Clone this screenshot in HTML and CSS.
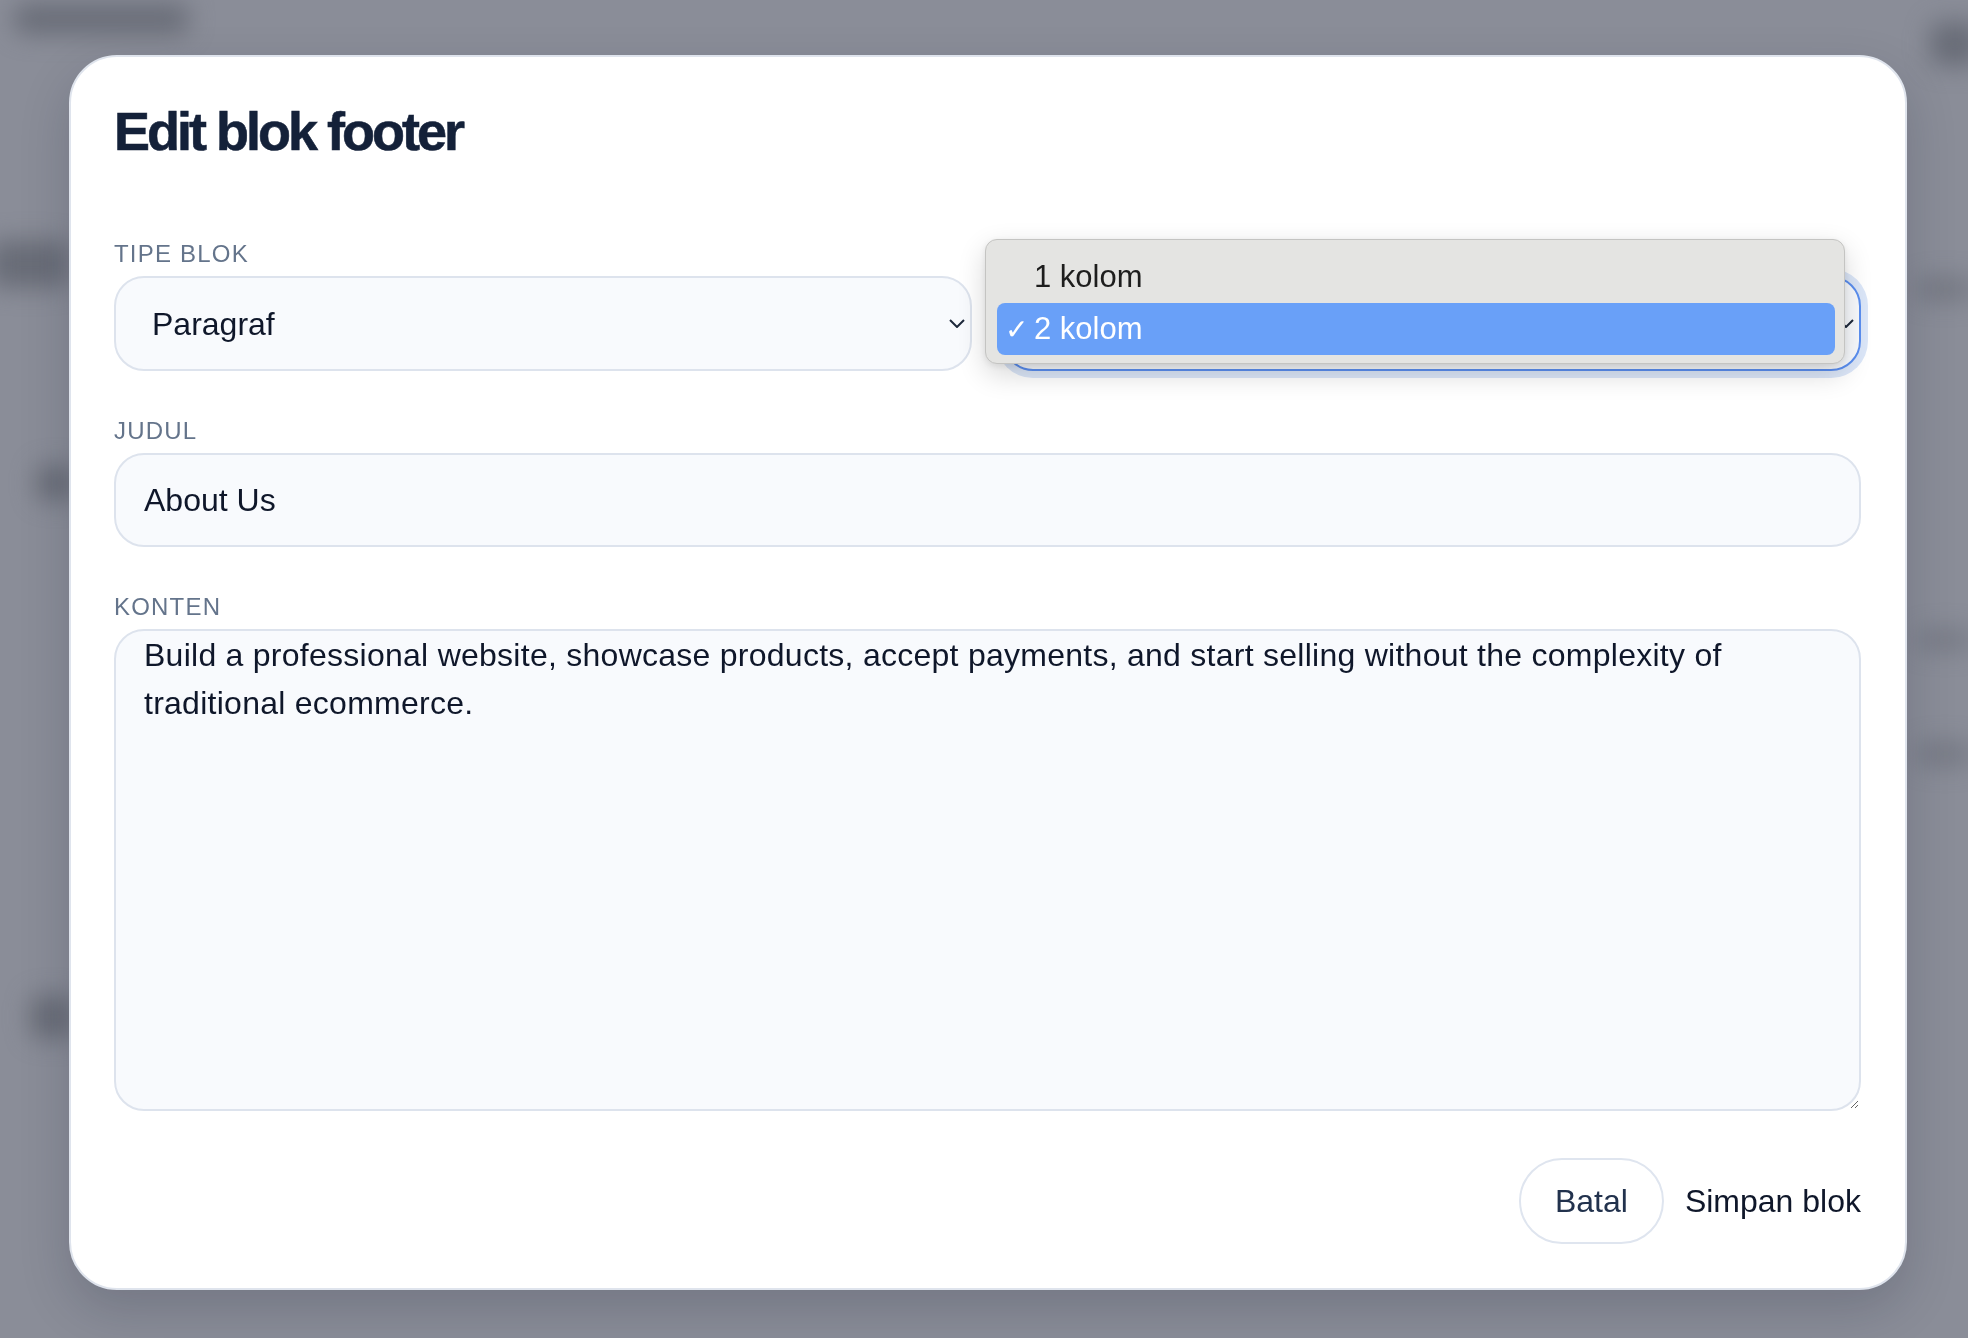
FILE: index.html
```html
<!DOCTYPE html>
<html lang="id">
<head>
  <meta charset="UTF-8">
  <meta name="viewport" content="width=device-width, initial-scale=1.0">
  <title>Edit blok footer</title>
  <link rel="stylesheet" href="styles.css">
</head>
<body>
  <!-- halaman di belakang modal (buram) -->
  <div class="backdrop" aria-hidden="true">
    <div class="blob blob-title"></div>
    <div class="blob blob-l1"></div>
    <div class="blob blob-l2"></div>
    <div class="blob blob-l3"></div>
    <div class="blob blob-r1"></div>
    <div class="blob blob-r2"></div>
    <div class="blob blob-r3"></div>
    <div class="blob blob-r4"></div>
  </div>

  <div class="overlay">
    <div class="modal" role="dialog" aria-labelledby="modalTitle">
      <h1 id="modalTitle">Edit blok footer</h1>

      <div class="row">
        <div class="field">
          <label class="label" for="tipeBlok">Tipe blok</label>
          <div class="select-wrap">
            <select id="tipeBlok" class="control select">
              <option>Paragraf</option>
              <option>Tautan</option>
            </select>
            <svg class="chevron" viewBox="0 0 16 9" aria-hidden="true"><path d="M1 1 L8 8 L15 1"/></svg>
          </div>
        </div>

        <div class="field">
          <!-- label tertutup oleh menu yang terbuka -->
          <label class="label label-covered" for="kolom">Kolom</label>
          <div class="select-wrap">
            <select id="kolom" class="control select is-open">
              <option>1 kolom</option>
              <option selected>2 kolom</option>
            </select>
            <svg class="chevron" viewBox="0 0 16 9" aria-hidden="true"><path d="M1 1 L8 8 L15 1"/></svg>
          </div>
          <ul class="select-menu">
            <li class="menu-item">1 kolom</li>
            <li class="menu-item active"><span class="check">✓</span>2 kolom</li>
          </ul>
        </div>
      </div>

      <div class="field field-block">
        <label class="label" for="judul">Judul</label>
        <input id="judul" class="control" type="text" value="About Us">
      </div>

      <div class="field field-block">
        <label class="label" for="konten">Konten</label>
        <textarea id="konten" class="control textarea">Build a professional website, showcase products, accept payments, and start selling without the complexity of traditional ecommerce.</textarea>
      </div>

      <div class="actions">
        <button type="button" class="btn-ghost">Batal</button>
        <button type="button" class="btn-save">Simpan blok</button>
      </div>
    </div>
  </div>
</body>
</html>
```

FILE: styles.css
```css
/* Dasar */
* {
  margin: 0;
  padding: 0;
  box-sizing: border-box;
}
body {
  font-family: 'Liberation Sans', Arial, Helvetica, sans-serif;
  background: #8a8d98;
  color: #0f172a;
  width: 1968px;
  height: 1338px;
  overflow: hidden;
  position: relative;
}

/* Halaman buram di belakang */
.backdrop {
  position: absolute;
  inset: 0;
  filter: blur(12px);
}
.blob {
  position: absolute;
  background: #5e616c;
  border-radius: 12px;
  opacity: 0.75;
}
.blob-title { left: 14px; top: 4px; width: 175px; height: 30px; }
.blob-l1 { left: -10px; top: 240px; width: 80px; height: 48px; }
.blob-l2 { left: 36px; top: 465px; width: 40px; height: 36px; }
.blob-l3 { left: 30px; top: 995px; width: 45px; height: 44px; }
.blob-r1 { left: 1930px; top: 22px; width: 50px; height: 44px; }
.blob-r2 { left: 1915px; top: 278px; width: 60px; height: 22px; opacity: 0.5; }
.blob-r3 { left: 1915px; top: 630px; width: 60px; height: 20px; opacity: 0.45; }
.blob-r4 { left: 1915px; top: 742px; width: 60px; height: 24px; opacity: 0.45; }

/* Modal */
.overlay {
  position: relative;
  padding: 55px 0 0 69px;
}
.modal {
  width: 1838px;
  background: #fff;
  border: 2px solid #dfe4ed;
  border-radius: 48px;
  padding: 42px 44px 44px 43px;
  box-shadow: 0 20px 50px rgba(15, 23, 42, 0.18);
}
.modal h1 {
  font-size: 54px;
  line-height: 65px;
  font-weight: 700;
  letter-spacing: -3px;
  color: #142139;
  -webkit-text-stroke: 0.6px #142139;
  margin-bottom: 74px;
}

/* Field */
.row {
  display: grid;
  grid-template-columns: 1fr 1fr;
  gap: 31px;
}
.field {
  display: flex;
  flex-direction: column;
  gap: 6px;
  position: relative;
}
.field-block {
  margin-top: 44px;
}
.label {
  font-size: 24px;
  line-height: 32px;
  text-transform: uppercase;
  letter-spacing: 1.2px;
  color: #64748b;
}
.label-covered {
  visibility: hidden;
}
.control {
  width: 100%;
  font-family: inherit;
  font-size: 32px;
  color: #0f172a;
  background: #f8fafd;
  border: 2px solid #dde3ed;
  border-radius: 30px;
  outline: none;
}
input.control {
  height: 94px;
  padding: 0 28px;
}
.select-wrap {
  position: relative;
}
.select {
  appearance: none;
  -webkit-appearance: none;
  height: 95px;
  padding: 0 60px 0 36px;
}
.select.is-open {
  border-color: #5b8ff0;
  box-shadow: 0 0 0 7px #dbe6f8;
}
.chevron {
  position: absolute;
  right: 7px;
  top: 43px;
  width: 16px;
  height: 9px;
  fill: none;
  stroke: #1e293b;
  stroke-width: 2;
}
.textarea {
  height: 482px;
  padding: 0 28px;
  line-height: 48px;
  letter-spacing: 0.26px;
  resize: vertical;
  border-radius: 30px;
}

/* Menu pilihan yang sedang terbuka */
.select-menu {
  position: absolute;
  top: 1px;
  left: -18px;
  right: 16px;
  height: 125px;
  list-style: none;
  padding: 11px 9px 10px 11px;
  background: #e4e4e2;
  border: 1px solid #c4c4c2;
  border-radius: 12px;
  box-shadow: 0 10px 28px rgba(0, 0, 0, 0.16), 0 2px 6px rgba(0, 0, 0, 0.08);
}
.menu-item {
  height: 52px;
  display: flex;
  align-items: center;
  padding-left: 37px;
  font-size: 31px;
  color: #1d1d1d;
  border-radius: 8px;
  position: relative;
}
.menu-item.active {
  background: #69a0f8;
  color: #fff;
}
.menu-item .check {
  position: absolute;
  left: 8px;
  font-size: 28px;
}

/* Tombol */
.actions {
  display: flex;
  justify-content: flex-end;
  align-items: center;
  gap: 21px;
  margin-top: 47px;
}
.actions button {
  font-family: inherit;
  font-size: 32px;
  cursor: pointer;
  background: transparent;
}
.btn-ghost {
  height: 86px;
  padding: 0 34px;
  border: 2px solid #dfe5ef;
  border-radius: 999px;
  color: #22324d;
}
.btn-save {
  border: none;
  padding: 0;
  color: #0f172a;
}
```
